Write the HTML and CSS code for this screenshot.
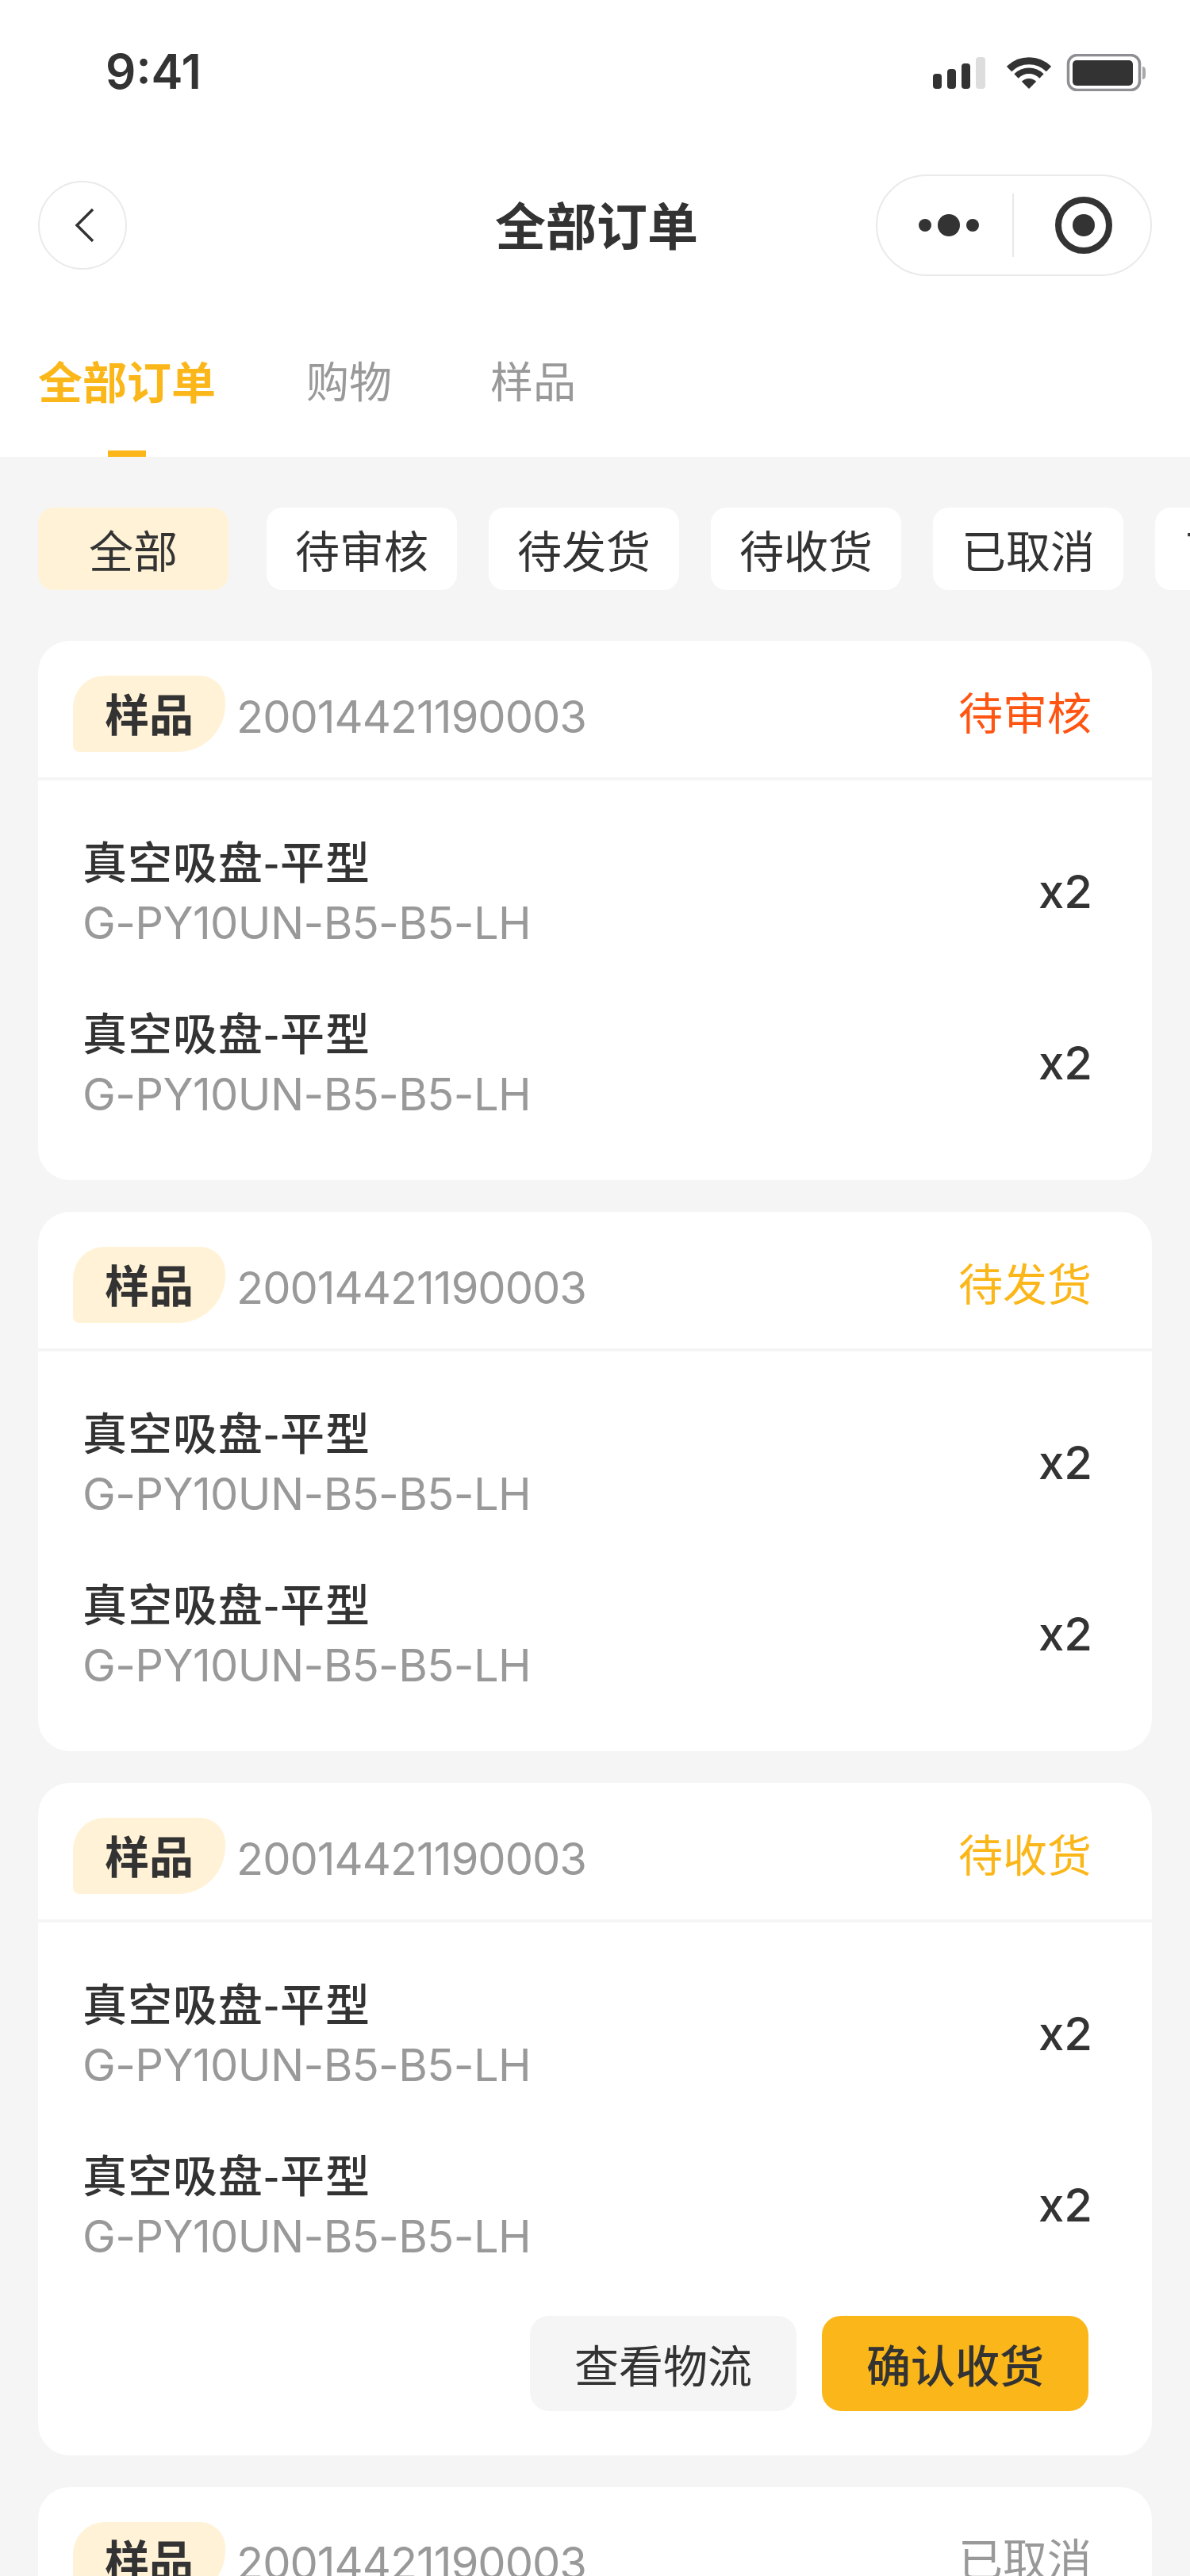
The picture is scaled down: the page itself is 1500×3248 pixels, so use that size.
FILE: index.html
```html
<!DOCTYPE html>
<html lang="zh-CN">
<head>
<meta charset="utf-8">
<title>全部订单</title>
<link rel="stylesheet" href="styles.css">
</head>
<body>
<div class="page">
  <header class="top">
    <div class="status">
      <span class="time">9:41</span>
      <svg class="status-icons" width="268" height="47" viewBox="0 0 268 47">
        <rect x="0" y="25" width="11" height="19" rx="4" fill="#333"/>
        <rect x="18" y="19" width="11" height="25" rx="4" fill="#333"/>
        <rect x="36" y="12" width="11" height="32" rx="4" fill="#333"/>
        <rect x="54" y="4" width="12" height="40" rx="4" fill="#ddd"/>
        <path d="M96 19a35.5 35.5 0 0 1 50 0" fill="none" stroke="#333" stroke-width="9"/>
        <path d="M105 28a22.5 22.5 0 0 1 32 0" fill="none" stroke="#333" stroke-width="7.5"/>
        <path d="M111.800 34.800a13 13 0 0 1 18.400 0L121 44z" fill="#333"/>
        <rect x="170.500" y="1.500" width="90" height="44" rx="11" fill="none" stroke="#8e8e93" stroke-width="3.500"/>
        <rect x="176" y="8" width="76" height="32" rx="5" fill="#333"/>
        <path d="M264 16c2.500 0 4 2 4 4v8c0 2-1.500 4-4 4z" fill="#a8a8ac"/>
      </svg>
    </div>
    <nav class="nav">
      <div class="back">
        <svg width="34" height="46" viewBox="0 0 34 46"><path d="M29 3 9 23l20 20" fill="none" stroke="#333" stroke-width="3.500"/></svg>
      </div>
      <h1 class="title">全部订单</h1>
      <div class="capsule">
        <svg width="344" height="124" viewBox="0 0 344 124">
          <circle cx="60" cy="62" r="8" fill="#333"/>
          <circle cx="90" cy="62" r="14" fill="#333"/>
          <circle cx="120" cy="62" r="8" fill="#333"/>
          <rect x="170" y="22" width="2" height="80" fill="#e8e8e8"/>
          <circle cx="260" cy="62" r="32" fill="none" stroke="#333" stroke-width="8"/>
          <circle cx="260" cy="62" r="14" fill="#333"/>
        </svg>
      </div>
    </nav>
    <div class="tabs">
      <div class="tab tab-on"><span>全部订单</span><i class="tab-bar"></i></div>
      <div class="tab"><span>购物</span></div>
      <div class="tab tab-last"><span>样品</span></div>
    </div>
  </header>

  <div class="filters">
    <div class="chip chip-on">全部</div>
    <div class="chip">待审核</div>
    <div class="chip">待发货</div>
    <div class="chip">待收货</div>
    <div class="chip">已取消</div>
    <div class="chip">已完成</div>
  </div>

  <main class="orders">
    <section class="card">
      <div class="card-head">
        <span class="tag">样品</span><span class="no">20014421190003</span>
        <span class="state state-red">待审核</span>
      </div>
      <div class="card-body">
        <div class="row"><div class="info"><div class="name">真空吸盘-平型</div><div class="code">G-PY10UN-B5-B5-LH</div></div><div class="qty">x2</div></div>
        <div class="row"><div class="info"><div class="name">真空吸盘-平型</div><div class="code">G-PY10UN-B5-B5-LH</div></div><div class="qty">x2</div></div>
      </div>
    </section>

    <section class="card">
      <div class="card-head">
        <span class="tag">样品</span><span class="no">20014421190003</span>
        <span class="state state-yellow">待发货</span>
      </div>
      <div class="card-body">
        <div class="row"><div class="info"><div class="name">真空吸盘-平型</div><div class="code">G-PY10UN-B5-B5-LH</div></div><div class="qty">x2</div></div>
        <div class="row"><div class="info"><div class="name">真空吸盘-平型</div><div class="code">G-PY10UN-B5-B5-LH</div></div><div class="qty">x2</div></div>
      </div>
    </section>

    <section class="card">
      <div class="card-head">
        <span class="tag">样品</span><span class="no">20014421190003</span>
        <span class="state state-yellow">待收货</span>
      </div>
      <div class="card-body card-body-actions">
        <div class="row"><div class="info"><div class="name">真空吸盘-平型</div><div class="code">G-PY10UN-B5-B5-LH</div></div><div class="qty">x2</div></div>
        <div class="row"><div class="info"><div class="name">真空吸盘-平型</div><div class="code">G-PY10UN-B5-B5-LH</div></div><div class="qty">x2</div></div>
        <div class="actions">
          <div class="btn">查看物流</div>
          <div class="btn btn-main">确认收货</div>
        </div>
      </div>
    </section>

    <section class="card">
      <div class="card-head">
        <span class="tag">样品</span><span class="no">20014421190003</span>
        <span class="state state-grey">已取消</span>
      </div>
    </section>
  </main>
</div>
</body>
</html>
```

FILE: styles.css
```css
* { box-sizing: border-box; margin: 0; padding: 0; }
html, body { width: 1500px; height: 3248px; overflow: hidden; }
body {
  background: #f5f5f5;
  color: #333;
  font-family: "Noto Sans CJK SC", "Noto Sans", sans-serif;
  font-size: 56px;
}
.page { width: 1500px; height: 3248px; overflow: hidden; }
.top { background: #fff; height: 576px; }

.status {
  height: 180px;
  display: flex;
  align-items: center;
  justify-content: space-between;
  padding: 0 56px 0 133px;
}
.time {
  font-family: Inter, "Liberation Sans", sans-serif;
  font-size: 60px;
  font-weight: 600;
  line-height: 72px;
}
.status-icons { display: block; margin-top: 3px; }

.nav {
  height: 208px;
  padding: 0 48px;
  display: grid;
  grid-template-columns: 1fr auto 1fr;
  align-items: center;
}
.back {
  width: 112px;
  height: 112px;
  border: 2px solid #eaeaea;
  border-radius: 50%;
  display: flex;
  align-items: center;
  justify-content: center;
}
.back svg { display: block; margin-left: 2px; }
.title {
  font-size: 64px;
  font-weight: 700;
  line-height: 80px;
  margin: 0 0 6px 4px;
}
.capsule {
  width: 348px;
  height: 128px;
  border: 2px solid #eaeaea;
  border-radius: 64px;
  justify-self: end;
}
.capsule svg { display: block; }

.tabs {
  height: 188px;
  padding: 53px 48px 0;
  display: flex;
  gap: 114px;
}
.tab {
  display: flex;
  flex-direction: column;
  align-items: center;
  color: #999;
  font-size: 54px;
  line-height: 76px;
}
.tab-last { margin-left: 10px; }
.tab-on { color: #fbb71a; font-size: 56px; font-weight: 700; }
.tab-bar {
  display: block;
  width: 48px;
  height: 8px;
  margin-top: 51px;
  background: #fbb71a;
}

.filters {
  display: flex;
  gap: 40px;
  height: 104px;
  margin-top: 64px;
  padding-left: 48px;
  overflow: hidden;
}
.chip {
  flex: 0 0 240px;
  height: 104px;
  padding-bottom: 2px;
  border-radius: 20px;
  background: #fff;
  display: flex;
  align-items: center;
  justify-content: center;
  white-space: nowrap;
}
.chip-on { background: #fff2d6; margin-right: 8px; }

.orders {
  margin: 64px 48px 0;
  display: flex;
  flex-direction: column;
  gap: 40px;
}
.card { background: #fff; border-radius: 40px; overflow: hidden; }
.card-head {
  height: 176px;
  padding: 44px 76px 0 44px;
  border-bottom: 4px solid #f5f5f5;
  display: flex;
  align-items: flex-start;
}
.tag {
  width: 192px;
  height: 96px;
  border-radius: 40px 32px 60px 8px;
  background: #fff2d6;
  font-weight: 700;
  line-height: 92px;
  text-align: center;
}
.no {
  margin: 4px 0 0 14px;
  color: #999;
  font-family: Inter, "Noto Sans", sans-serif;
  letter-spacing: -1px;
  line-height: 96px;
}
.state { margin-left: auto; line-height: 96px; margin-top: -4px; }
.state-red { color: #ff5512; }
.state-yellow { color: #fbb71a; }
.state-grey { color: #999; }

.card-body {
  padding: 64px 80px 72px 56px;
  display: flex;
  flex-direction: column;
  gap: 64px;
}
.card-body-actions { padding-bottom: 56px; }
.row { display: flex; align-items: center; justify-content: space-between; }
.name { line-height: 72px; font-weight: 500; letter-spacing: 1px; }
.code {
  padding-top: 8px;
  line-height: 72px;
  color: #999;
  font-family: Inter, "Noto Sans", sans-serif;
  letter-spacing: -0.6px;
}
.qty {
  margin-right: -5px;
  font-family: Inter, "Noto Sans", sans-serif;
  font-weight: 500;
  font-size: 58px;
  line-height: 76px;
}
.actions { display: flex; justify-content: flex-end; gap: 32px; }
.btn {
  width: 336px;
  height: 120px;
  padding-bottom: 2px;
  border-radius: 24px;
  background: #f5f5f5;
  display: flex;
  align-items: center;
  justify-content: center;
}
.btn-main { background: #fbb71a; font-weight: 500; }
```
